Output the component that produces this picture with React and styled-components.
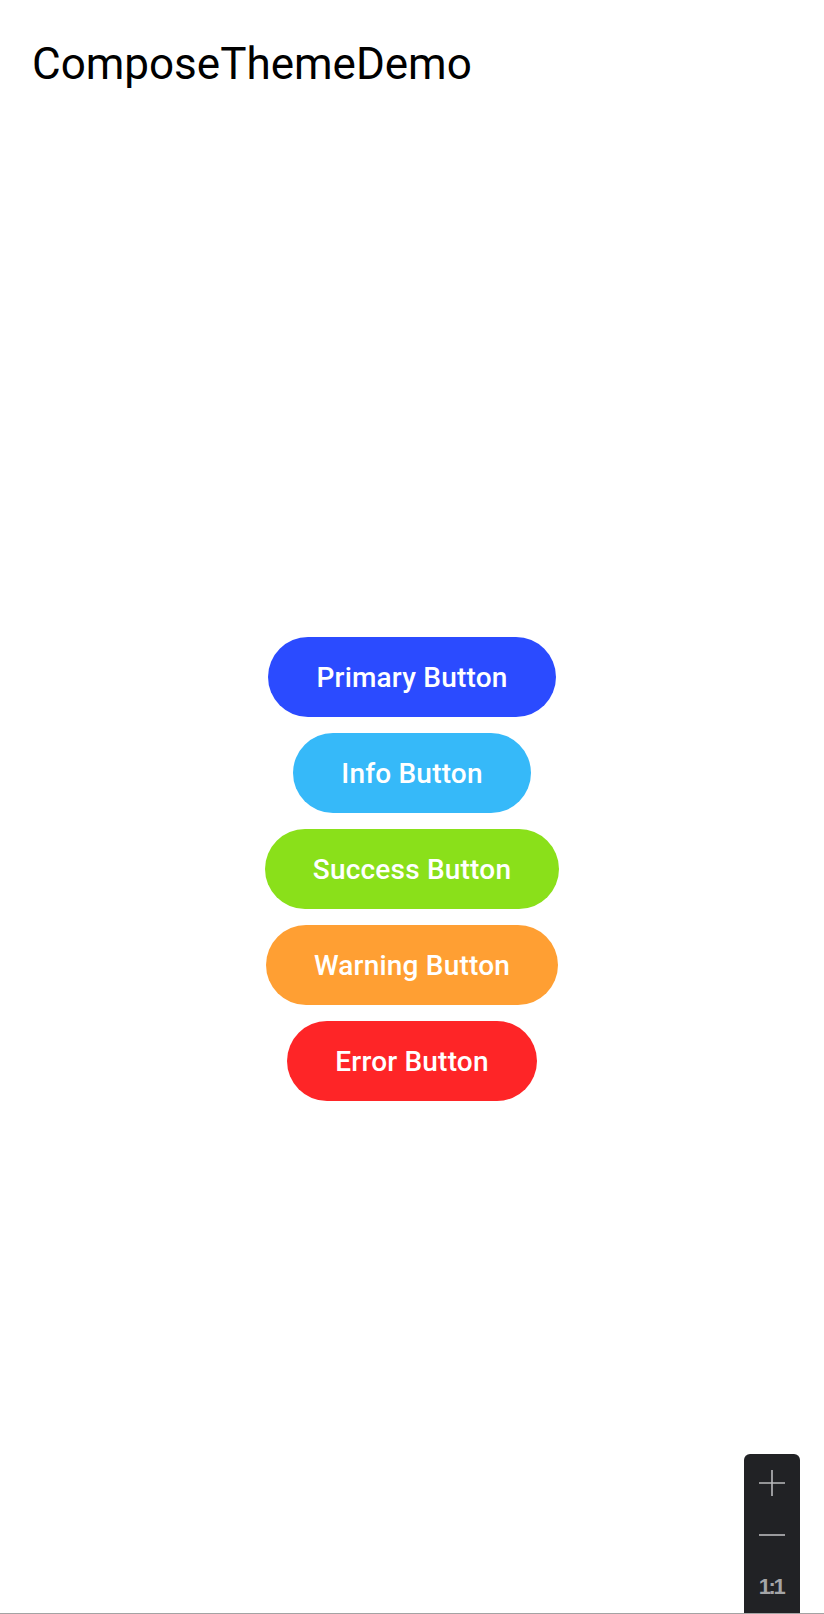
import React from "react";
import styled, { createGlobalStyle } from "styled-components";

const GlobalStyle = createGlobalStyle`
  html, body {
    margin: 0;
    padding: 0;
    background: #ffffff;
  }
  * { box-sizing: border-box; }
`;

const Page = styled.div`
  position: relative;
  width: 824px;
  height: 1614px;
  display: flex;
  flex-direction: column;
  background: #ffffff;
  border-bottom: 1px solid #a3a3a3;
  font-family: Roboto, "Noto Sans", sans-serif;
  overflow: hidden;
`;

const AppBar = styled.header`
  height: 128px;
  flex: 0 0 128px;
  display: flex;
  align-items: center;
  padding: 0 32px;
`;

const Title = styled.h1`
  margin: 0;
  font-family: Roboto, sans-serif;
  font-weight: 400;
  font-size: 44px;
  line-height: 56px;
  color: #000000;
`;

const Content = styled.main`
  flex: 1;
  display: flex;
  flex-direction: column;
  align-items: center;
  justify-content: center;
  gap: 16px;
  padding-bottom: 3px;
`;

const PillButton = styled.button`
  height: 80px;
  padding: 0 48px;
  border: none;
  border-radius: 40px;
  background: ${(p) => p.$bg};
  color: #ffffff;
  font-family: Roboto, sans-serif;
  font-weight: 500;
  font-size: 28px;
  letter-spacing: 0.2px;
  cursor: pointer;
`;

const ZoomPanel = styled.div`
  position: absolute;
  left: 744px;
  top: 1454px;
  width: 56px;
  bottom: 0;
  background: #212225;
  border-radius: 6px 6px 0 0;
  display: flex;
  flex-direction: column;
  align-items: center;
`;

const ZoomIconSlot = styled.div`
  height: ${(p) => p.$h}px;
  display: flex;
  align-items: center;
  justify-content: center;
`;

const RatioLabel = styled.span`
  font-family: "Liberation Sans", Arial, sans-serif;
  font-weight: 700;
  font-size: 22px;
  line-height: 22px;
  letter-spacing: -2.5px;
  color: #a4a5a7;
  margin-top: 18px;
  padding-right: 2px;
`;

const buttons = [
  { label: "Primary Button", color: "#2b4bff" },
  { label: "Info Button", color: "#36b9f9" },
  { label: "Success Button", color: "#8ae01a" },
  { label: "Warning Button", color: "#ff9f33" },
  { label: "Error Button", color: "#fe2527" },
];

export default function App() {
  return (
    <>
      <GlobalStyle />
      <Page>
        <AppBar>
          <Title>ComposeThemeDemo</Title>
        </AppBar>
        <Content>
          {buttons.map((b) => (
            <PillButton key={b.label} $bg={b.color}>
              {b.label}
            </PillButton>
          ))}
        </Content>
        <ZoomPanel>
          <ZoomIconSlot $h={58}>
            <svg width="28" height="28" viewBox="0 0 28 28">
              <path d="M14 1v26M1 14h26" stroke="#b9babc" strokeWidth="1.6" fill="none" />
            </svg>
          </ZoomIconSlot>
          <ZoomIconSlot $h={46}>
            <svg width="28" height="4" viewBox="0 0 28 4">
              <path d="M1 2h26" stroke="#b9babc" strokeWidth="1.6" fill="none" />
            </svg>
          </ZoomIconSlot>
          <RatioLabel>1:1</RatioLabel>
        </ZoomPanel>
      </Page>
    </>
  );
}
